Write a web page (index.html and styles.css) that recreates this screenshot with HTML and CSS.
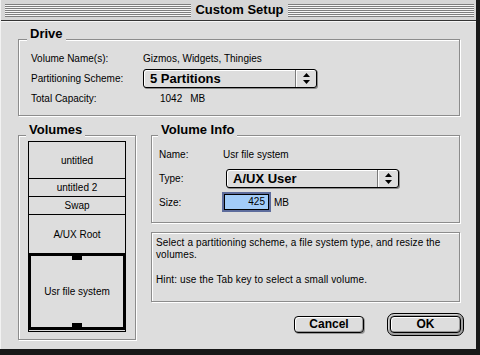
FILE: index.html
```html
<!DOCTYPE html>
<html lang="en">
  <head>
    <meta charset="UTF-8" />
    <meta name="viewport" content="width=device-width, initial-scale=1.0" />
    <title>Custom Setup</title>
    <link rel="stylesheet" href="styles.css">
  </head>
  <body>
    <div class="window">
      <div class="titlebar">
        <span class="stripes"></span>
        <span class="title">Custom Setup</span>
        <span class="stripes"></span>
      </div>

      <div class="content">
        <div class="group drive">
          <div class="group-title">Drive</div>
          <div class="row">
            <span class="label">Volume Name(s):</span>
            <span>Gizmos, Widgets, Thingies</span>
          </div>
          <div class="row">
            <span class="label">Partitioning Scheme:</span>
            <div class="popup popup-scheme">
              <span class="popup-text">5 Partitions</span>
              <span class="popup-arrows">
                <svg width="7" height="11" viewBox="0 0 7 11"><path d="M3.5 0 L7 4 H0 Z M0 7 H7 L3.5 11 Z" fill="#000" /></svg>
              </span>
            </div>
          </div>
          <div class="row">
            <span class="label">Total Capacity:</span>
            <span class="capacity">1042</span>
            <span class="unit">MB</span>
          </div>
        </div>

        <div class="middle">
          <div class="group volumes">
            <div class="group-title">Volumes</div>
            <ul class="volume-list">
              <li style="height: 37px">untitled</li>
              <li style="height: 18px">untitled 2</li>
              <li style="height: 18px">Swap</li>
              <li class="before-selected" style="height: 38px">A/UX Root</li>
              <li class="selected" style="height: 77px">
                <span class="handle"></span>
                <span>Usr file system</span>
                <span class="handle"></span>
              </li>
            </ul>
          </div>

          <div class="side">
            <div class="group info">
              <div class="group-title">Volume Info</div>
              <div class="row">
                <span class="label">Name:</span>
                <span>Usr file system</span>
              </div>
              <div class="row">
                <span class="label">Type:</span>
                <div class="popup popup-type">
                  <span class="popup-text">A/UX User</span>
                  <span class="popup-arrows">
                    <svg width="7" height="11" viewBox="0 0 7 11"><path d="M3.5 0 L7 4 H0 Z M0 7 H7 L3.5 11 Z" fill="#000" /></svg>
                  </span>
                </div>
              </div>
              <div class="row">
                <span class="label">Size:</span>
                <div class="field"><div class="field-inner">425</div></div>
                <span class="unit-size">MB</span>
              </div>
            </div>

            <div class="help">
              <p>Select a partitioning scheme, a file system type, and resize the<br>volumes.</p>
              <p class="hint">Hint: use the Tab key to select a small volume.</p>
            </div>

            <div class="buttons">
              <a href="javascript:;" class="button">Cancel</a>
              <div class="default">
                <a href="javascript:;" class="button">OK</a>
              </div>
            </div>
          </div>
        </div>
      </div>
    </div>
  </body>
</html>
```

FILE: styles.css
```css
html,
body,
ul,
li,
p {
  margin: 0;
  padding: 0;
}

ul,
li {
  list-style: none;
}

a {
  text-decoration: none;
  color: #000;
}

html,
body {
  background: #181818;
}

body {
  font-family: "Liberation Sans", Arial, sans-serif;
  font-size: 10px;
  color: #000;
}

.window {
  width: 476px;
  height: 349px;
  box-sizing: border-box;
  border-left: 1px solid #f2f2f2;
  background: #dddddd;
  display: flex;
  flex-direction: column;
}

/* title bar */

.titlebar {
  height: 20px;
  border-bottom: 1px solid #333;
  background: #d6d6d6;
  display: flex;
  align-items: center;
  padding: 0 2px 0 4px;
}

.stripes {
  flex: 1;
  height: 13px;
  background: repeating-linear-gradient(to bottom, #7e7e7e 0 1px, #f6f6f6 1px 2px);
}

.title {
  padding: 0 4px;
  font-size: 13px;
  font-weight: bold;
  line-height: 20px;
}

.content {
  flex: 1;
  border-top: 1px solid #f6f6f6;
  padding: 17px 16px 0 17px;
}

/* group boxes */

.group {
  border: 1px solid #8c8c8c;
  box-shadow: inset 1px 1px 0 #fff, 1px 1px 0 #fff;
}

.group-title {
  width: max-content;
  margin-top: -13px;
  padding: 0 3px;
  background: #dddddd;
  font-size: 13px;
  font-weight: bold;
  line-height: 14px;
}

.row {
  display: flex;
  align-items: center;
  height: 20px;
}

.drive {
  padding: 0 0 7px 12px;
}

.drive .group-title {
  margin-left: -4px;
  margin-bottom: 7px;
}

.drive .label {
  width: 112px;
}

.capacity {
  margin-left: 17px;
}

.unit {
  margin-left: 8px;
}

/* popup menus */

.popup {
  display: flex;
  height: 19px;
  box-sizing: border-box;
  border: 1px solid #000;
  border-radius: 3px;
  background: #dddddd;
  box-shadow: inset 1px 1px 0 #fff, 1px 1px 0 #8a8a8a;
}

.popup-scheme {
  width: 174px;
}

.popup-type {
  width: 173px;
  margin-left: 3px;
}

.popup-text {
  flex: 1;
  padding-left: 6px;
  font-size: 13px;
  font-weight: bold;
  line-height: 17px;
}

.popup-arrows {
  width: 20px;
  border-left: 1px solid #7a7a7a;
  box-shadow: inset 1px 0 0 #fff;
  display: flex;
  align-items: center;
  justify-content: center;
}

/* volumes */

.middle {
  display: flex;
  gap: 15px;
  margin-top: 19px;
}

.volumes {
  width: 118px;
  box-sizing: border-box;
  padding: 0 9px 7px;
}

.volumes .group-title {
  margin-left: -2px;
  margin-bottom: 4px;
}

.volume-list {
  border: 1px solid #000;
}

.volume-list > li {
  box-sizing: border-box;
  display: flex;
  align-items: center;
  justify-content: center;
  border-bottom: 1px solid #000;
}

.volume-list > li.before-selected {
  border-bottom: 0;
}

.volume-list > li.selected {
  flex-direction: column;
  justify-content: space-between;
  border: 3px solid #000;
  margin: 0 -1px 1px;
}

.handle {
  width: 10px;
  height: 4px;
  background: #000;
}

/* volume info */

.side {
  flex: 1;
  display: flex;
  flex-direction: column;
}

.info {
  padding: 0 0 10px 7px;
}

.info .group-title {
  margin-left: -1px;
  margin-bottom: 7px;
}

.info .row + .row {
  margin-top: 4px;
}

.info .label {
  width: 64px;
}

.field {
  width: 49px;
  height: 20px;
  box-sizing: border-box;
  margin-left: -1px;
  border: 2px solid #5d6c9c;
}

.field-inner {
  height: 100%;
  box-sizing: border-box;
  border: 1px solid #000;
  background: #a2ccf8;
  padding-right: 3px;
  text-align: right;
  line-height: 14px;
}

.unit-size {
  margin-left: 3px;
}

.help {
  height: 70px;
  box-sizing: border-box;
  margin-top: 9px;
  padding: 4px 4px 0;
  border: 1px solid #8c8c8c;
  box-shadow: inset 1px 1px 0 #fff, 1px 1px 0 #fff;
  line-height: 12px;
  letter-spacing: 0.12px;
  white-space: nowrap;
}

.help .hint {
  margin-top: 13px;
}

/* buttons */

.buttons {
  display: flex;
  justify-content: flex-end;
  align-items: center;
  gap: 23px;
  margin-top: 11px;
  margin-right: -4px;
}

.button {
  display: block;
  width: 70px;
  height: 17px;
  box-sizing: border-box;
  border: 1px solid #000;
  border-radius: 4px;
  background: #dddddd;
  box-shadow: inset 1px 1px 0 #fff, inset -1px -1px 0 #999, 1px 1px 0 #999;
  font-size: 12px;
  font-weight: bold;
  line-height: 15px;
  text-align: center;
}

.default {
  padding: 2px;
  border: 1px solid #000;
  border-radius: 7px;
  background: #a2a2a2;
  box-shadow: inset 1px 1px 0 #d6d6d6;
}

.default .button {
  width: 71px;
  box-shadow: inset 1px 1px 0 #fff, inset -1px -1px 0 #999;
}
```
